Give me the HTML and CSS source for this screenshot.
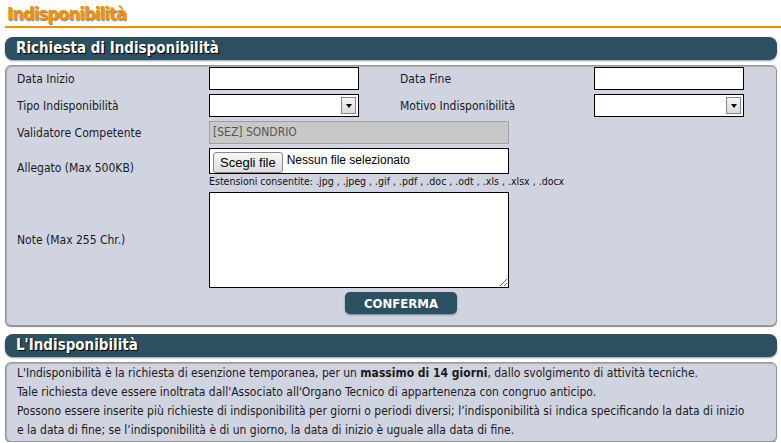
FILE: index.html
```html
<!DOCTYPE html>
<html lang="it">
<head>
    <meta charset="UTF-8">
    <title>Indisponibilità</title>
    <link rel="stylesheet" href="styles.css">
</head>
<body>
    <div class="pagina">
        <h1 class="titolo">Indisponibilità</h1>

        <div class="barra">Richiesta di Indisponibilità</div>
        <div class="pannello">
            <div class="griglia">
                <label>Data Inizio</label>
                <div class="campo"><input type="text" class="testo"></div>
                <label>Data Fine</label>
                <div class="campo"><input type="text" class="testo"></div>

                <label>Tipo Indisponibilità</label>
                <div class="campo"><div class="tendina"><span class="freccia"></span></div></div>
                <label>Motivo Indisponibilità</label>
                <div class="campo"><div class="tendina"><span class="freccia"></span></div></div>

                <label>Validatore Competente</label>
                <div class="campo largo"><div class="sola-lettura">[SEZ] SONDRIO</div></div>

                <label class="allegato">Allegato (Max 500KB)</label>
                <div class="campo largo">
                    <div class="file">
                        <span class="btn-file">Scegli file</span>
                        <span class="nome-file">Nessun file selezionato</span>
                    </div>
                    <div class="estensioni">Estensioni consentite: .jpg , .jpeg , .gif , .pdf , .doc , .odt , .xls , .xlsx , .docx</div>
                </div>

                <label>Note (Max 255 Chr.)</label>
                <div class="campo largo"><textarea class="note"></textarea></div>
            </div>
            <div class="azioni">
                <button class="btn-conferma">CONFERMA</button>
            </div>
        </div>

        <div class="barra seconda">L'Indisponibilità</div>
        <div class="pannello info">
            <p>L'Indisponibilità è la richiesta di esenzione temporanea, per un <b>massimo di 14 giorni</b>, dallo svolgimento di attività tecniche.</p>
            <p>Tale richiesta deve essere inoltrata dall'Associato all'Organo Tecnico di appartenenza con congruo anticipo.</p>
            <p>Possono essere inserite più richieste di indisponibilità per giorni o periodi diversi; l’indisponibilità si indica specificando la data di inizio<br>e la data di fine; se l’indisponibilità è di un giorno, la data di inizio è uguale alla data di fine.</p>
        </div>
    </div>
</body>
</html>
```
FILE: styles.css
```css
body {
    margin: 0;
    background: white;
    font-family: "DejaVu Sans Condensed", "DejaVu Sans", sans-serif;
    font-size: 12px;
    color: #1a1a1a;
}
.pagina {
    padding: 3px 4px 0 5px;
}
.titolo {
    margin: 0 -4px 0 0;
    padding: 0 0 1px 2px;
    font-size: 18px;
    line-height: 22px;
    font-weight: bold;
    color: #f39200;
    text-shadow: 1px 1px 1px #777;
    border-bottom: 2px solid #f39200;
    letter-spacing: -0.8px;
}
.barra {
    margin-top: 9px;
    height: 23px;
    line-height: 23px;
    padding-left: 11px;
    background: #2b5062;
    color: white;
    font-size: 15px;
    font-weight: bold;
    border-radius: 8px;
    text-shadow: 1px 1px 1px #000;
    box-shadow: 0 1px 2px rgba(0, 0, 0, 0.4);
}
.barra.seconda {
    margin-top: 8px;
}
.pannello {
    margin-top: 5px;
    background: #d0d4e0;
    border: 1px solid #999;
    border-radius: 6px;
    box-shadow: 0 1px 1px #888, inset 1px 1px 1px #aaa;
    padding: 1px 10px 11px 11px;
}
.griglia {
    display: grid;
    grid-template-columns: 192px 191px 194px 150px;
    row-gap: 4px;
    align-items: center;
}
.campo.largo {
    grid-column: 2 / 5;
}
.testo {
    box-sizing: border-box;
    width: 150px;
    height: 23px;
    border: 1px solid #000;
    margin: 0;
    display: block;
}
.tendina {
    box-sizing: border-box;
    width: 150px;
    height: 23px;
    border: 1px solid #000;
    background: white;
    display: flex;
    justify-content: flex-end;
    align-items: center;
    padding-right: 2px;
}
.freccia {
    box-sizing: border-box;
    width: 15px;
    height: 17px;
    border: 1px solid #888;
    background: linear-gradient(#f4f4f4, #dcdcdc);
    display: flex;
    align-items: center;
    justify-content: center;
}
.freccia::after {
    content: "";
    border-left: 3px solid transparent;
    border-right: 3px solid transparent;
    border-top: 4px solid #000;
}
.sola-lettura {
    box-sizing: border-box;
    width: 300px;
    height: 23px;
    line-height: 21px;
    padding-left: 3px;
    background: #c8c8c8;
    border: 1px solid #a0a0a0;
    color: #555;
}
.allegato {
    align-self: start;
    margin-top: 13px;
}
.file {
    box-sizing: border-box;
    width: 300px;
    height: 26px;
    border: 1px solid #000;
    background: white;
    display: flex;
    align-items: center;
    gap: 4px;
    padding-left: 3px;
    font-family: "Liberation Sans", Arial, sans-serif;
    font-size: 13px;
    color: #000;
}
.btn-file {
    padding: 2px 6px;
    border: 1px solid #8a8a8a;
    border-radius: 3px;
    background: linear-gradient(#f6f6f6, #dedede);
    font-size: 13px;
    line-height: 15px;
    margin-top: 2px;
}
.nome-file {
    font-size: 12px;
    margin-top: -2px;
}
.estensioni {
    font-size: 10.5px;
    line-height: 14px;
    color: #111;
}
.note {
    box-sizing: border-box;
    display: block;
    width: 300px;
    height: 96px;
    border: 1px solid #000;
    margin: 0;
}
.azioni {
    text-align: center;
    margin-top: 4px;
    padding-left: 19px;
}
.btn-conferma {
    width: 112px;
    height: 22px;
    padding: 0;
    border: none;
    border-radius: 5px;
    background: #2b5062;
    color: white;
    font-family: "DejaVu Sans Condensed", "DejaVu Sans", sans-serif;
    font-size: 13px;
    font-weight: bold;
    box-shadow: 0 1px 2px rgba(0, 0, 0, 0.4);
    cursor: pointer;
    display: inline-block;
    vertical-align: top;
}
.info {
    padding: 1px 8px 1px 11px;
    line-height: 19px;
}
.info p {
    margin: 0;
}
```
